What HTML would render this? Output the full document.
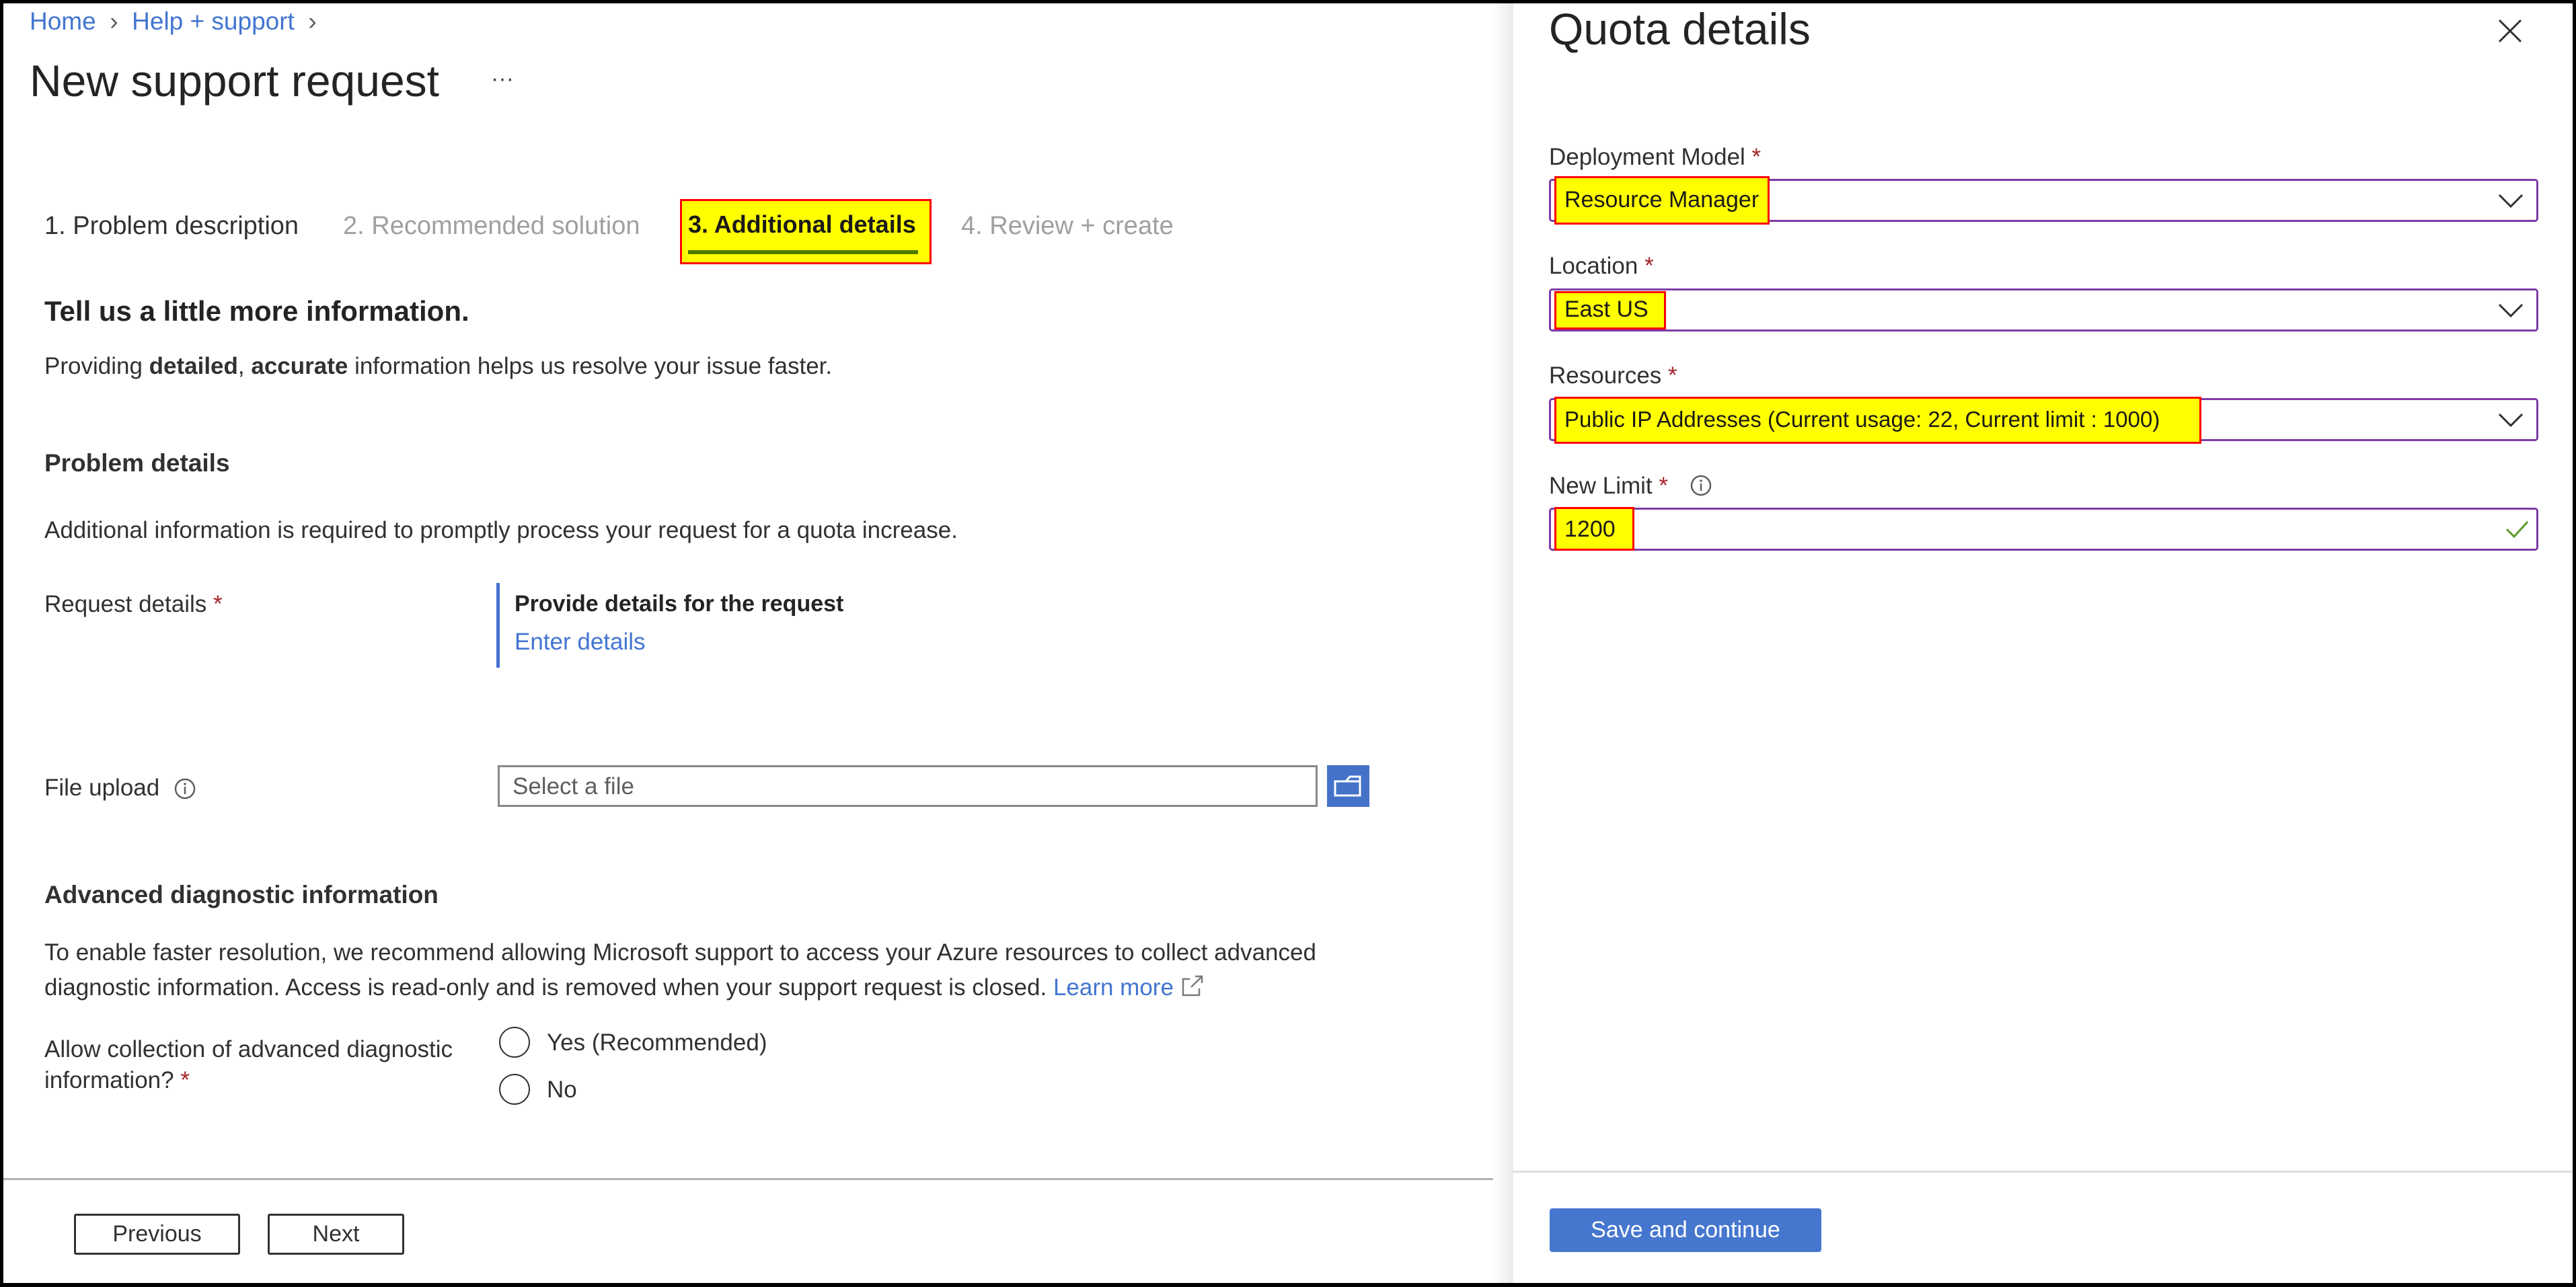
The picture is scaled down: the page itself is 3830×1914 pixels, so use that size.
<!DOCTYPE html>
<html><head><meta charset="utf-8"><style>
*{margin:0;padding:0;box-sizing:border-box}
html,body{width:3830px;height:1914px;overflow:hidden;background:#000}
body{position:relative;font-family:"Liberation Sans",sans-serif;color:#323130}
.t{position:absolute;white-space:nowrap;line-height:1}
.b{font-weight:bold}
.lnk{color:#4275d0}
.req{color:#a4262c}
.inp{position:absolute;border:3px solid #7e3aa6;border-radius:5px;background:#fff}
.hl{position:absolute;background:#ffff00;border:3px solid #ff0000}
</style></head><body>
<div style="position:absolute;left:5px;top:5px;width:3820px;height:1903px;background:#fff"></div>

<!-- Left -->
<div class="t lnk" style="left:44px;top:13px;font-size:37px">Home <span style="color:#605e5c">&nbsp;›&nbsp;</span> Help + support <span style="color:#605e5c">&nbsp;›</span></div>
<div class="t" style="left:44px;top:87px;font-size:66px;color:#252423">New support request</div>
<div class="t" style="left:730px;top:100px;font-size:34px;color:#444">···</div>

<div class="t" style="left:66px;top:317px;font-size:38px">1. Problem description</div>
<div class="t" style="left:510px;top:317px;font-size:38px;color:#a19f9d">2. Recommended solution</div>
<div class="hl" style="left:1011px;top:296px;width:374px;height:97px"></div>
<div class="t b" style="left:1023px;top:316px;font-size:36px;color:#1b1a19">3. Additional details</div>
<div style="position:absolute;left:1023px;top:372px;width:342px;height:6px;background:#4d7a00"></div>
<div class="t" style="left:1429px;top:317px;font-size:38px;color:#a19f9d">4. Review + create</div>

<div class="t b" style="left:66px;top:442px;font-size:42px;color:#252423">Tell us a little more information.</div>
<div class="t" style="left:66px;top:527px;font-size:35px">Providing <b>detailed</b>, <b>accurate</b> information helps us resolve your issue faster.</div>

<div class="t b" style="left:66px;top:670px;font-size:37px">Problem details</div>
<div class="t" style="left:66px;top:771px;font-size:35px">Additional information is required to promptly process your request for a quota increase.</div>

<div class="t" style="left:66px;top:881px;font-size:35px">Request details <span class="req">*</span></div>
<div style="position:absolute;left:738px;top:867px;width:5px;height:126px;background:#4270cf"></div>
<div class="t b" style="left:765px;top:881px;font-size:34px;color:#252423">Provide details for the request</div>
<div class="t lnk" style="left:765px;top:937px;font-size:35px">Enter details</div>

<div class="t" style="left:66px;top:1154px;font-size:35px">File upload</div>
<svg style="position:absolute;left:258px;top:1156px" width="34" height="34"><circle cx="17" cy="17" r="14" fill="none" stroke="#605e5c" stroke-width="2.5"/><line x1="17" y1="14" x2="17" y2="25" stroke="#605e5c" stroke-width="2.5"/><circle cx="17" cy="10" r="1.8" fill="#605e5c"/></svg>
<div style="position:absolute;left:740px;top:1138px;width:1219px;height:62px;border:3px solid #8a8886;background:#fff"></div>
<div class="t" style="left:762px;top:1152px;font-size:35px;color:#605e5c">Select a file</div>
<div style="position:absolute;left:1973px;top:1138px;width:63px;height:62px;background:#4472c9"></div>
<svg style="position:absolute;left:1973px;top:1138px" width="63" height="62"><path d="M12 24 H28 L34 17 H49 V45 H12 Z M34 17 L28 24 H49" fill="none" stroke="#fff" stroke-width="3"/></svg>

<div class="t b" style="left:66px;top:1312px;font-size:37px">Advanced diagnostic information</div>
<div class="t" style="left:66px;top:1399px;font-size:35px">To enable faster resolution, we recommend allowing Microsoft support to access your Azure resources to collect advanced</div>
<div class="t" style="left:66px;top:1448px;font-size:35px">diagnostic information. Access is read-only and is removed when your support request is closed. <span class="lnk">Learn more</span> <svg style="vertical-align:-2px" width="34" height="34"><path d="M14 8 H4 V32 H28 V22" fill="none" stroke="#7a7a7a" stroke-width="2.5"/><path d="M16 20 L32 4 M22 4 H32 V14" fill="none" stroke="#7a7a7a" stroke-width="2.5"/></svg></div>

<div class="t" style="left:66px;top:1543px;font-size:35px">Allow collection of advanced diagnostic</div>
<div class="t" style="left:66px;top:1589px;font-size:35px">information? <span class="req">*</span></div>
<div style="position:absolute;left:742px;top:1527px;width:46px;height:46px;border:2.5px solid #323130;border-radius:50%"></div>
<div style="position:absolute;left:742px;top:1597px;width:46px;height:46px;border:2.5px solid #323130;border-radius:50%"></div>
<div class="t" style="left:813px;top:1533px;font-size:35px">Yes (Recommended)</div>
<div class="t" style="left:813px;top:1603px;font-size:35px">No</div>

<div style="position:absolute;left:5px;top:1752px;width:2245px;height:3px;background:#b3b0ad"></div>
<div style="position:absolute;left:110px;top:1805px;width:247px;height:61px;border:3px solid #323130;border-radius:3px"></div>
<div class="t" style="left:110px;top:1818px;width:247px;text-align:center;font-size:34px">Previous</div>
<div style="position:absolute;left:398px;top:1805px;width:203px;height:61px;border:3px solid #323130;border-radius:3px"></div>
<div class="t" style="left:398px;top:1818px;width:203px;text-align:center;font-size:34px">Next</div>

<!-- Right panel -->
<div style="position:absolute;left:2220px;top:5px;width:30px;height:1903px;background:linear-gradient(90deg,#fff,#ebebeb)"></div>
<div style="position:absolute;left:2250px;top:5px;width:1575px;height:1903px;background:#fff"></div>
<div class="t" style="left:2303px;top:10px;font-size:66px;color:#252423">Quota details</div>
<svg style="position:absolute;left:3712px;top:26px" width="40" height="40"><path d="M4 4 L36 36 M36 4 L4 36" stroke="#323130" stroke-width="3"/></svg>

<div class="t" style="left:2303px;top:216px;font-size:35px">Deployment Model <span class="req">*</span></div>
<div class="inp" style="left:2303px;top:266px;width:1471px;height:64px"></div>
<div class="hl" style="left:2311px;top:262px;width:320px;height:72px"></div>
<div class="t" style="left:2326px;top:280px;font-size:34px;color:#1b1a19">Resource Manager</div>

<div class="t" style="left:2303px;top:378px;font-size:35px">Location <span class="req">*</span></div>
<div class="inp" style="left:2303px;top:429px;width:1471px;height:64px"></div>
<div class="hl" style="left:2311px;top:433px;width:166px;height:57px"></div>
<div class="t" style="left:2326px;top:443px;font-size:34px;color:#1b1a19">East US</div>

<div class="t" style="left:2303px;top:541px;font-size:35px">Resources <span class="req">*</span></div>
<div class="inp" style="left:2303px;top:592px;width:1471px;height:64px"></div>
<div class="hl" style="left:2311px;top:590px;width:962px;height:70px"></div>
<div class="t" style="left:2326px;top:607px;font-size:33px;color:#1b1a19">Public IP Addresses (Current usage: 22, Current limit : 1000)</div>

<div class="t" style="left:2303px;top:705px;font-size:35px">New Limit <span class="req">*</span></div>
<svg style="position:absolute;left:2512px;top:705px" width="34" height="34"><circle cx="17" cy="17" r="14" fill="none" stroke="#605e5c" stroke-width="2.5"/><line x1="17" y1="14" x2="17" y2="25" stroke="#605e5c" stroke-width="2.5"/><circle cx="17" cy="10" r="1.8" fill="#605e5c"/></svg>
<div class="inp" style="left:2303px;top:755px;width:1471px;height:64px"></div>
<div class="hl" style="left:2311px;top:754px;width:119px;height:65px"></div>
<div class="t" style="left:2326px;top:770px;font-size:34px;color:#1b1a19">1200</div>
<svg style="position:absolute;left:3720px;top:770px" width="44" height="34"><path d="M7 17 L18 28 L38 6" fill="none" stroke="#5b9a24" stroke-width="3"/></svg>

<svg style="position:absolute;left:3712px;top:284px" width="42" height="30"><path d="M4 6 L21 23 L38 6" fill="none" stroke="#323130" stroke-width="3"/></svg>
<svg style="position:absolute;left:3712px;top:447px" width="42" height="30"><path d="M4 6 L21 23 L38 6" fill="none" stroke="#323130" stroke-width="3"/></svg>
<svg style="position:absolute;left:3712px;top:610px" width="42" height="30"><path d="M4 6 L21 23 L38 6" fill="none" stroke="#323130" stroke-width="3"/></svg>

<div style="position:absolute;left:2250px;top:1741px;width:1575px;height:3px;background:#e1dfdd"></div>
<div style="position:absolute;left:2304px;top:1797px;width:404px;height:65px;background:#4677cf;border-radius:4px"></div>
<div class="t" style="left:2304px;top:1812px;width:404px;text-align:center;font-size:34px;color:#fff">Save and continue</div>
</body></html>
